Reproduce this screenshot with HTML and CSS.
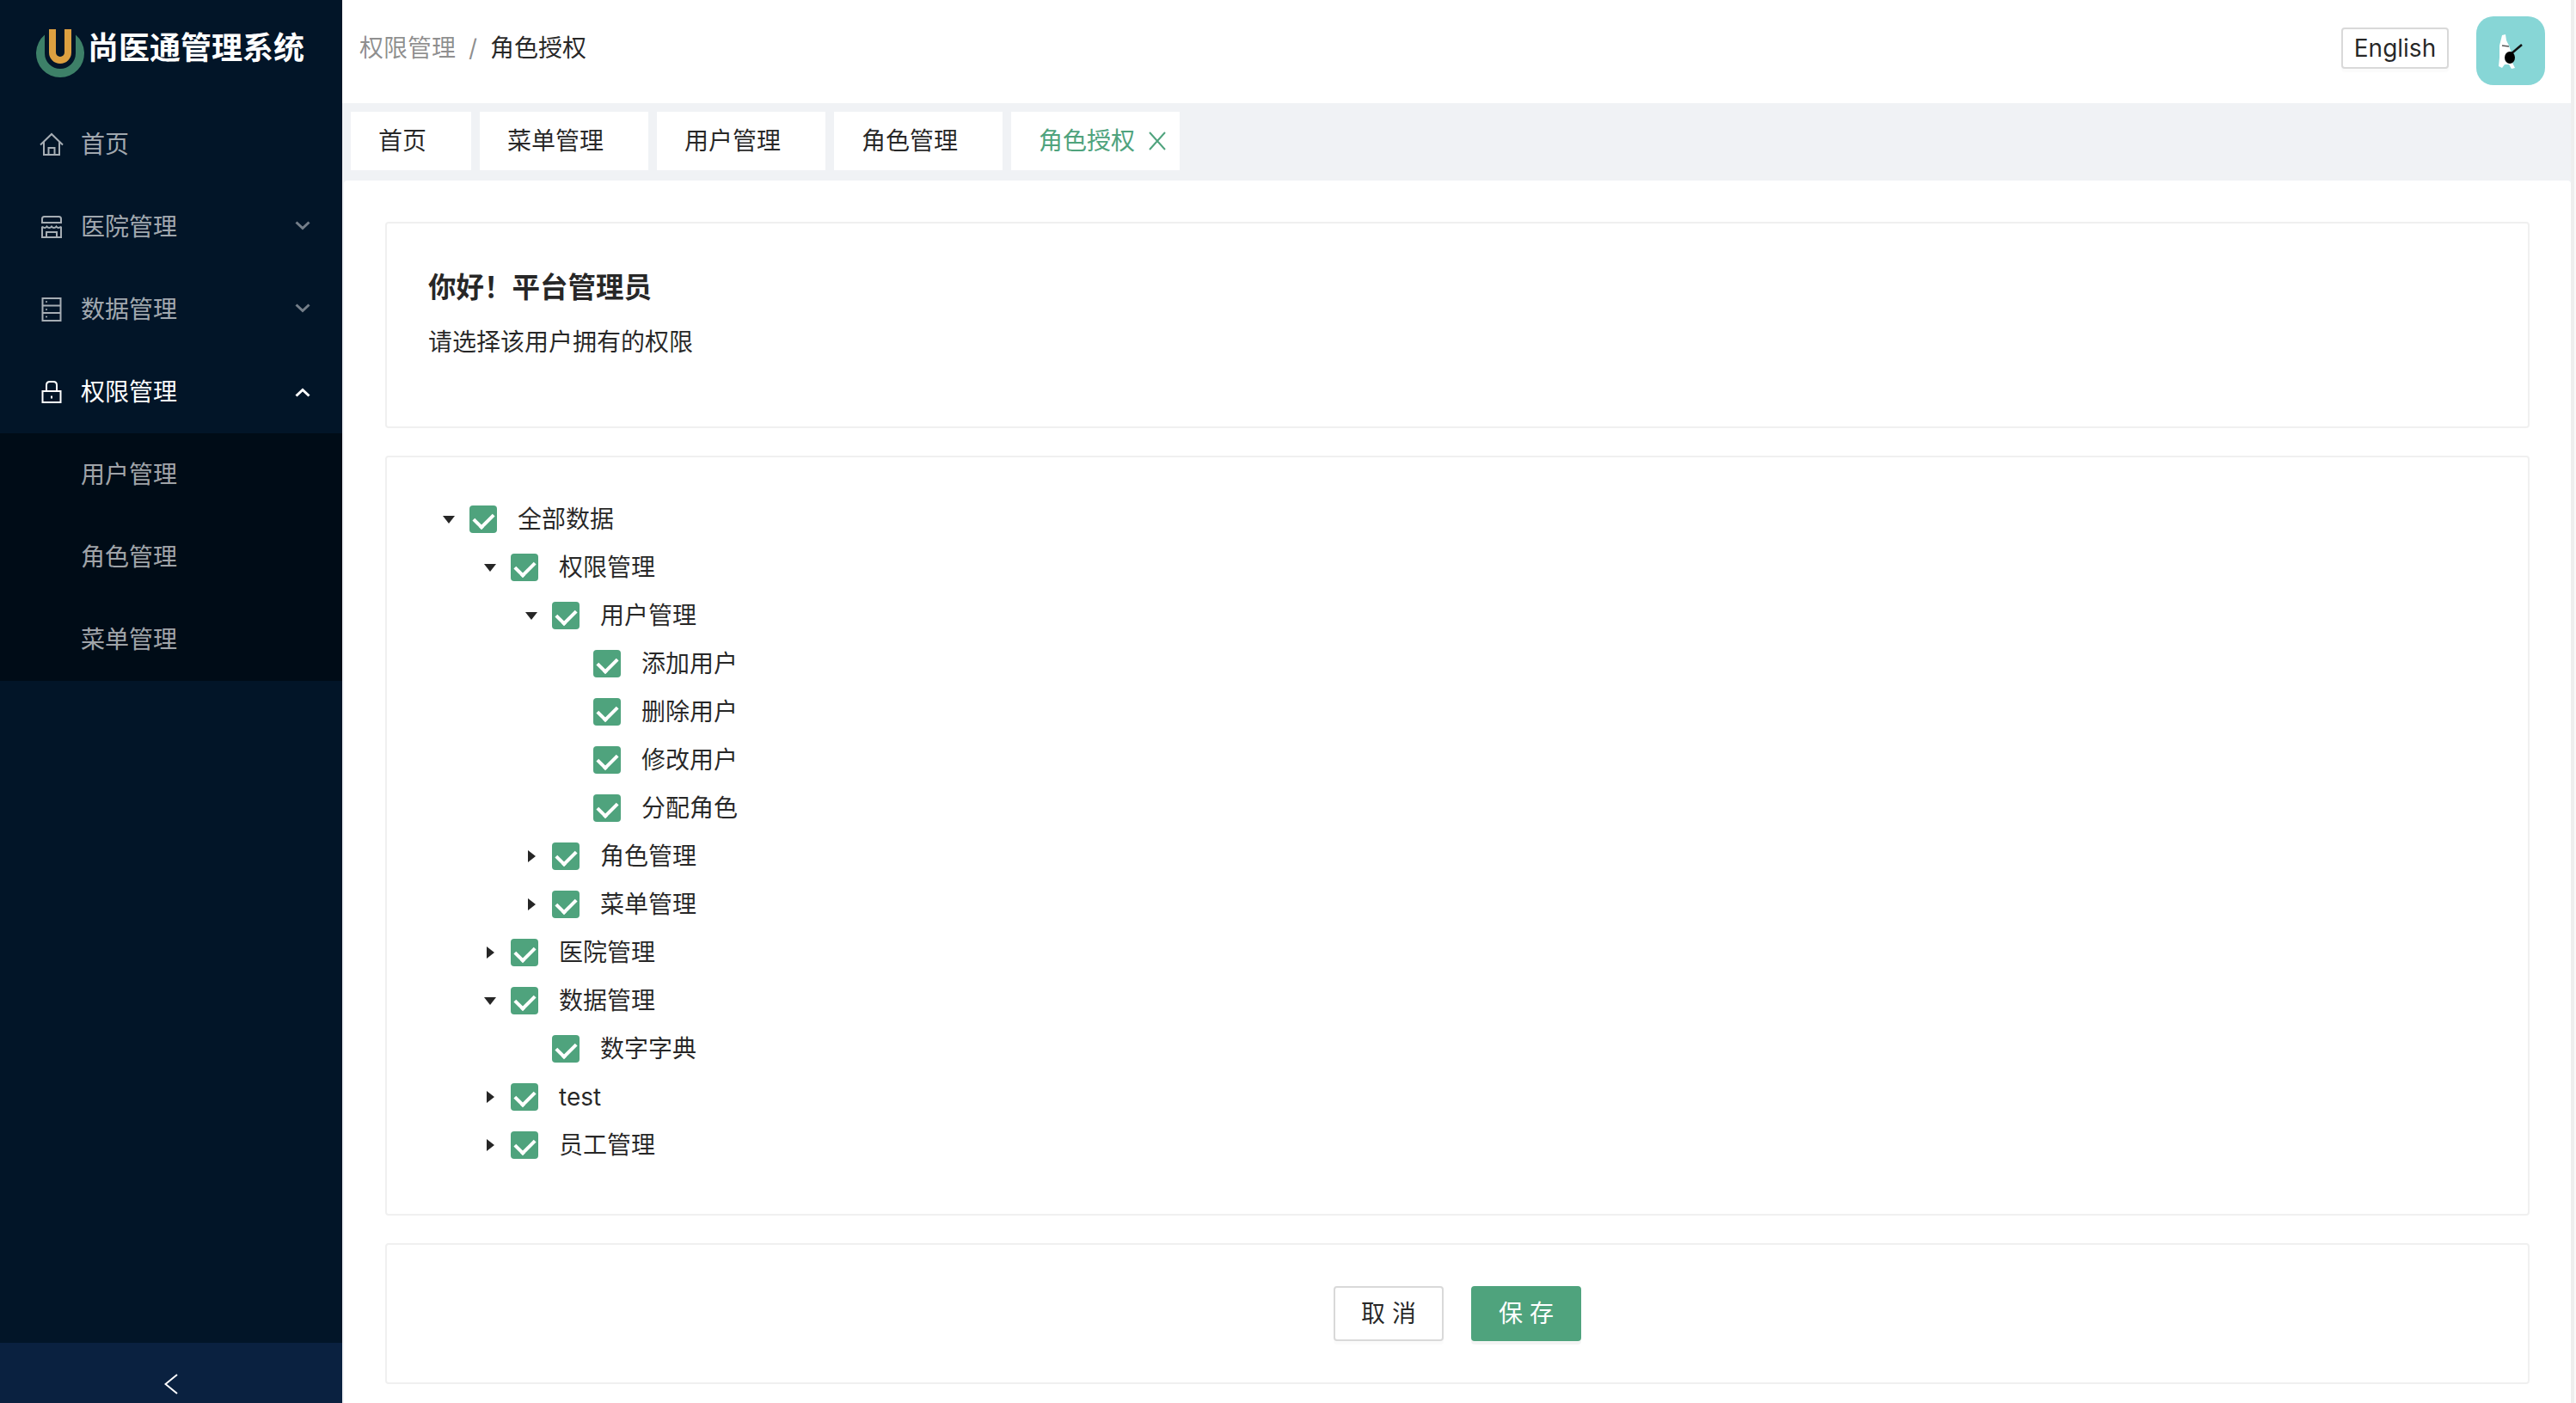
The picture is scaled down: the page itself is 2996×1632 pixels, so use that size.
FILE: index.html
```html
<!DOCTYPE html>
<html lang="zh-CN">
<head>
<meta charset="utf-8">
<title>尚医通管理系统</title>
<link rel="stylesheet" href="styles.css">
</head>
<body>
<div class="app">
  <aside class="sider">
    <div class="brand">
      <svg class="brand-logo" viewBox="40 28 60 60"><path class="logo-ring" d="M52 36.600A28 28 0 1 0 88 36.600V58A18 18 0 0 1 52 58Z"/><path class="logo-u" d="M61 30V57A9 9 0 0 0 79 57V30"/></svg>
      <span class="brand-name">尚医通管理系统</span>
    </div>
    <nav class="menu">
      <div class="menu-item">
        <svg class="menu-icon" viewBox="0 0 28 28"><path d="M1 14.500 14 2l13 12.500M5 11v15h18V11M10.500 26v-8h7v8"/></svg>
        <span>首页</span>
      </div>
      <div class="menu-item">
        <svg class="menu-icon" viewBox="0 0 28 28"><path d="M3 9V4.500Q3 2 5.500 2h17Q25 2 25 4.500V9M2 9h24M3 13.500V26h22V13.500M3 13.500c2 2 4 2 5.500 0 1.500 2 4 2 5.500 0 1.500 2 4 2 5.500 0 1.500 2 3.500 2 5.500 0M8 26v-6h12v6"/></svg>
        <span>医院管理</span>
        <svg class="chevron" viewBox="0 0 18 12"><path d="M1.500 2.500 9 9.500l7.500-7"/></svg>
      </div>
      <div class="menu-item">
        <svg class="menu-icon" viewBox="0 0 28 28"><path d="M3.500 1h21v26h-21zM3.500 9.500h21M3.500 18h21"/><path class="icon-dot" d="M7 5h2M7 14h2M7 22.500h2"/></svg>
        <span>数据管理</span>
        <svg class="chevron" viewBox="0 0 18 12"><path d="M1.500 2.500 9 9.500l7.500-7"/></svg>
      </div>
      <div class="menu-item menu-item-open">
        <svg class="menu-icon" viewBox="0 0 28 28"><path d="M3.500 13h21v13h-21zM8 13V6q0-4 4-4h4q4 0 4 4v7M14 18.500v3"/></svg>
        <span>权限管理</span>
        <svg class="chevron" viewBox="0 0 18 12"><path d="M1.500 9.500 9 2.500l7.500 7"/></svg>
      </div>
      <div class="submenu">
        <div class="menu-item submenu-item"><span>用户管理</span></div>
        <div class="menu-item submenu-item"><span>角色管理</span></div>
        <div class="menu-item submenu-item"><span>菜单管理</span></div>
      </div>
    </nav>
    <div class="sider-trigger">
      <svg class="trigger-icon" viewBox="0 0 16 24"><path d="M15 1 1.500 12 15 23"/></svg>
    </div>
  </aside>

  <div class="main">
    <header class="topbar">
      <div class="crumbs">
        <span class="crumb-link">权限管理</span>
        <span class="crumb-sep">/</span>
        <span class="crumb-current">角色授权</span>
      </div>
      <div class="topbar-actions">
        <button class="lang-btn">English</button>
        <div class="avatar">
          <svg class="avatar-art" viewBox="0 0 80 80">
            <path class="rabbit" d="M30 22 34 21 35 28 38 34 40 40 41 52 45 60 41 61 38 56 33 56 30 60 26 58 27 48 27 34Z"/>
            <path class="guitar-neck" d="M40 44 53 33"/>
            <ellipse class="guitar-body" cx="39" cy="48" rx="6" ry="7"/>
            <path class="rabbit-eye" d="M30 34 38 35"/>
          </svg>
        </div>
      </div>
    </header>

    <div class="tabs">
      <div class="tab">首页</div>
      <div class="tab">菜单管理</div>
      <div class="tab">用户管理</div>
      <div class="tab">角色管理</div>
      <div class="tab tab-active">
        <span>角色授权</span>
        <svg class="tab-close" viewBox="0 0 22 22"><path d="M2 1 20 21M20 1 2 21"/></svg>
      </div>
    </div>

    <main class="content">
      <section class="card card-intro">
        <h1 class="intro-title">你好！平台管理员</h1>
        <p class="intro-text">请选择该用户拥有的权限</p>
      </section>

      <section class="card card-tree">
        <div class="tree-row"><i class="switch switch-open"></i><i class="check"></i><span>全部数据</span></div>
        <div class="tree-row lv1"><i class="switch switch-open"></i><i class="check"></i><span>权限管理</span></div>
        <div class="tree-row lv2"><i class="switch switch-open"></i><i class="check"></i><span>用户管理</span></div>
        <div class="tree-row lv3"><i class="switch"></i><i class="check"></i><span>添加用户</span></div>
        <div class="tree-row lv3"><i class="switch"></i><i class="check"></i><span>删除用户</span></div>
        <div class="tree-row lv3"><i class="switch"></i><i class="check"></i><span>修改用户</span></div>
        <div class="tree-row lv3"><i class="switch"></i><i class="check"></i><span>分配角色</span></div>
        <div class="tree-row lv2"><i class="switch switch-closed"></i><i class="check"></i><span>角色管理</span></div>
        <div class="tree-row lv2"><i class="switch switch-closed"></i><i class="check"></i><span>菜单管理</span></div>
        <div class="tree-row lv1"><i class="switch switch-closed"></i><i class="check"></i><span>医院管理</span></div>
        <div class="tree-row lv1"><i class="switch switch-open"></i><i class="check"></i><span>数据管理</span></div>
        <div class="tree-row lv2"><i class="switch"></i><i class="check"></i><span>数字字典</span></div>
        <div class="tree-row lv1"><i class="switch switch-closed"></i><i class="check"></i><span>test</span></div>
        <div class="tree-row lv1"><i class="switch switch-closed"></i><i class="check"></i><span>员工管理</span></div>
      </section>

      <section class="card card-actions">
        <button class="btn">取 消</button>
        <button class="btn btn-primary">保 存</button>
      </section>
    </main>
  </div>

  <div class="scroll-edge"></div>
</div>
</body>
</html>
```

FILE: styles.css
```css
* {
  box-sizing: border-box;
}

html,
body {
  margin: 0;
  height: 100%;
  overflow: hidden;
}

body {
  font-family: Inter, "Noto Sans CJK SC", sans-serif;
  font-size: 28px;
  line-height: 40px;
  color: #262626;
  background: #fff;
}

.app {
  display: flex;
  height: 1632px;
}

/* Sidebar */
.sider {
  width: 398px;
  flex: none;
  display: flex;
  flex-direction: column;
  background: #021528;
  color: rgba(255, 255, 255, 0.65);
}

.brand {
  height: 120px;
  flex: none;
  display: flex;
  align-items: center;
  padding: 0 0 8px 40px;
}

.brand-logo {
  width: 60px;
  height: 60px;
  margin-top: 12px;
  flex: none;
}

.logo-ring {
  fill: #3d8068;
}

.logo-u {
  fill: none;
  stroke: #dca040;
  stroke-width: 8;
}

.brand-name {
  margin-left: 2px;
  font-size: 36px;
  font-weight: 700;
  line-height: 48px;
  color: #fff;
}

.menu {
  flex: 1;
  padding-top: 8px;
}

.menu-item {
  height: 80px;
  margin-bottom: 16px;
  padding: 0 37px 0 46px;
  display: flex;
  align-items: center;
}

.menu-icon {
  width: 28px;
  height: 28px;
  flex: none;
  margin-right: 20px;
  fill: none;
  stroke: currentColor;
  stroke-width: 2;
}

.icon-dot {
  stroke-width: 1.500;
}

.chevron {
  width: 18px;
  height: 12px;
  margin: 0 0 4px auto;
  fill: none;
  stroke: rgba(255, 255, 255, 0.45);
  stroke-width: 3;
}

.menu-item-open {
  margin-bottom: 8px;
  color: #fff;
}

.menu-item-open .chevron {
  margin: 2px 0 0 auto;
  stroke: #fff;
}

.submenu {
  background: #000c17;
  padding: 8px 0;
}

.submenu-item {
  padding-left: 94px;
}

.submenu-item:last-child {
  margin-bottom: 0;
}

.sider-trigger {
  height: 70px;
  flex: none;
  display: flex;
  justify-content: center;
  padding-top: 36px;
  background: #0a2140;
}

.trigger-icon {
  width: 16px;
  height: 24px;
  fill: none;
  stroke: #fff;
  stroke-width: 2;
}

/* Main column */
.main {
  flex: 1;
  min-width: 0;
  display: flex;
  flex-direction: column;
  background: #f0f2f5;
}

.topbar {
  height: 120px;
  flex: none;
  display: flex;
  justify-content: space-between;
  padding: 0 30px 0 20px;
  background: #fff;
}

.crumbs {
  display: flex;
  align-items: center;
  height: 112px;
}

.crumb-link {
  color: rgba(0, 0, 0, 0.45);
}

.crumb-sep {
  margin: 0 15px;
  color: rgba(0, 0, 0, 0.45);
}

.crumb-current {
  color: rgba(0, 0, 0, 0.85);
}

.topbar-actions {
  display: flex;
  align-items: flex-start;
  gap: 32px;
  padding-top: 19px;
}

.lang-btn {
  width: 125px;
  height: 48px;
  margin-top: 13px;
  padding: 0;
  border: 2px solid #d9d9d9;
  border-radius: 4px;
  background: #fff;
  box-shadow: 0 4px 0 rgba(0, 0, 0, 0.015);
  font: inherit;
  line-height: 40px;
  color: rgba(0, 0, 0, 0.85);
}

.avatar {
  width: 80px;
  height: 80px;
  border-radius: 20px;
  background: #87d6d6;
  overflow: hidden;
}

.avatar-art {
  display: block;
  width: 80px;
  height: 80px;
}

.rabbit {
  fill: #fff;
}

.guitar-neck {
  fill: none;
  stroke: #111;
  stroke-width: 2.500;
}

.guitar-body {
  fill: #000;
}

.rabbit-eye {
  fill: none;
  stroke: #555;
  stroke-width: 1.500;
}

/* Tabs */
.tabs {
  height: 90px;
  flex: none;
  display: flex;
  gap: 10px;
  padding: 10px 0 12px 10px;
}

.tab {
  height: 68px;
  display: flex;
  align-items: center;
  padding: 0 52px 0 32px;
  background: #fff;
  color: rgba(0, 0, 0, 0.85);
}

.tab-active {
  padding-right: 15px;
  color: #4fa37d;
}

.tab-close {
  width: 22px;
  height: 22px;
  margin-left: 15px;
  fill: none;
  stroke: currentColor;
  stroke-width: 2;
}

/* Content */
.content {
  flex: 1;
  min-height: 0;
  margin-left: 2px;
  padding: 48px 48px 0;
  display: flex;
  flex-direction: column;
  gap: 32px;
  background: #fff;
  border-radius: 4px 4px 0 0;
}

.card {
  flex: none;
  border: 2px solid #f0f0f0;
  border-radius: 4px;
  background: #fff;
}

.card-intro {
  height: 240px;
  padding: 53px 48px 0;
}

.intro-title {
  margin: 0;
  font-size: 32.500px;
  font-weight: 700;
  line-height: 44px;
  color: rgba(0, 0, 0, 0.85);
}

.intro-text {
  margin: 20px 0 0;
  line-height: 42px;
  color: rgba(0, 0, 0, 0.85);
}

.card-tree {
  height: 884px;
  padding: 44px 48px 0;
}

.tree-row {
  height: 56px;
  display: flex;
  align-items: center;
  color: rgba(0, 0, 0, 0.85);
}

.lv1 {
  padding-left: 48px;
}

.lv2 {
  padding-left: 96px;
}

.lv3 {
  padding-left: 144px;
}

.switch {
  width: 48px;
  height: 32px;
  flex: none;
  display: flex;
  align-items: center;
  justify-content: center;
}

.switch-open::before {
  content: "";
  border-style: solid;
  border-width: 9px 7px 0;
  border-color: #262626 transparent transparent;
}

.switch-closed::before {
  content: "";
  border-style: solid;
  border-width: 7px 0 7px 9px;
  border-color: transparent transparent transparent #262626;
}

.check {
  width: 32px;
  height: 32px;
  flex: none;
  margin-right: 24px;
  display: flex;
  align-items: center;
  justify-content: center;
  border-radius: 4px;
  background: #4fa37d;
}

.check::after {
  content: "";
  width: 11px;
  height: 18px;
  margin-top: -3px;
  border: solid #fff;
  border-width: 0 4px 4px 0;
  transform: rotate(45deg);
}

.card-actions {
  height: 164px;
  display: flex;
  align-items: center;
  justify-content: center;
  gap: 32px;
}

.btn {
  width: 128px;
  height: 64px;
  padding: 0;
  border: 2px solid #d9d9d9;
  border-radius: 4px;
  background: #fff;
  box-shadow: 0 4px 0 rgba(0, 0, 0, 0.015);
  font: inherit;
  color: rgba(0, 0, 0, 0.85);
}

.btn-primary {
  border-color: #4fa37d;
  background: #4fa37d;
  box-shadow: 0 4px 0 rgba(0, 0, 0, 0.045);
  color: #fff;
}

.scroll-edge {
  width: 6px;
  flex: none;
  background: #fafafa;
  border-left: 4px solid #eeeeee;
}
```
